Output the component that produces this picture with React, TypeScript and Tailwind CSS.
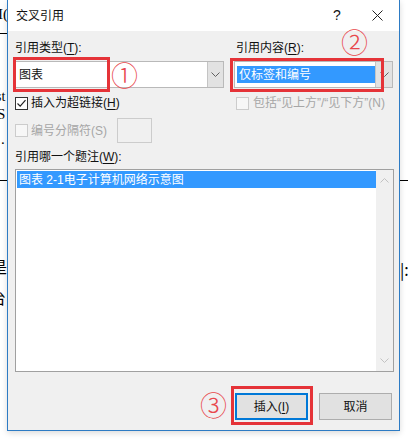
import React from 'react'

const font = "font-['Liberation_Sans','Noto_Sans_CJK_SC',sans-serif]"

function Chevron({ up = false, color = '#606060' }: { up?: boolean; color?: string }) {
  return (
    <svg width="9" height="5" viewBox="0 0 9 5" className={up ? 'rotate-180' : ''}>
      <path d="M0.5 0.5 L4.5 4.5 L8.5 0.5" fill="none" stroke={color} strokeWidth="1" />
    </svg>
  )
}

function CheckBox({ checked = false, disabled = false }: { checked?: boolean; disabled?: boolean }) {
  return (
    <div
      className={`w-[13px] h-[13px] shrink-0 border flex items-center justify-center ${
        disabled ? 'border-[#cccccc] bg-[#f7f7f7]' : 'border-[#333333] bg-white'
      }`}
    >
      {checked && (
        <svg width="11" height="11" viewBox="0 0 11 11">
          <path d="M1.5 5.5 L4.2 8.2 L9.5 2.2" fill="none" stroke="#222" strokeWidth="1.2" />
        </svg>
      )}
    </div>
  )
}

function Key({ k }: { k: string }) {
  return <span className="underline underline-offset-2">{k}</span>
}

function Circled({ n, className }: { n: string; className: string }) {
  return (
    <span
      className={`absolute text-[27px] leading-none text-[#e8474c] font-['Noto_Sans_CJK_SC',sans-serif] font-light ${className}`}
    >
      {n}
    </span>
  )
}

export default function App() {
  return (
    <div className={`relative w-[408px] h-[439px] bg-white overflow-hidden ${font} text-[12px] text-[#111]`}>
      {/* document behind the dialog */}
      <div className="absolute inset-0 font-['Liberation_Serif',serif] text-[15px] text-black">
        <span className="absolute left-[-2px] top-[3px]">I(</span>
        <div className="absolute left-0 top-[33px] w-[10px] h-px bg-black" />
        <span className="absolute left-[-4px] top-[86px] text-[14px]">st</span>
        <span className="absolute left-[-3px] top-[103px]">S</span>
        <span className="absolute left-[1px] top-[128px]">.</span>
        <div className="absolute left-0 top-[180px] w-[10px] h-px bg-black" />
        <span className="absolute left-[-9px] top-[254px] font-['Noto_Sans_CJK_SC',sans-serif] text-[16px]">是</span>
        <span className="absolute left-[-10px] top-[285px] font-['Noto_Sans_CJK_SC',sans-serif] text-[16px]">台</span>
        <div className="absolute left-[398px] top-[180px] w-[10px] h-px bg-black" />
        <span className="absolute left-[400px] top-[257px] font-['Noto_Sans_CJK_SC',sans-serif] text-[16px]">|:</span>
      </div>

      {/* dialog window */}
      <div className="relative z-10 ml-[7px] w-[393px] h-[431px] flex flex-col border-x border-b border-[#2d7bc4] shadow-[0_2px_6px_rgba(0,0,0,0.15)]">
        <div className="h-[31px] bg-white flex items-center pl-[8px] shrink-0">
          <span className="flex-1">交叉引用</span>
          <span className="w-[20px] text-center text-[14px] mr-[25px]">?</span>
          <svg width="11" height="11" viewBox="0 0 11 11" className="mr-[16px]">
            <path d="M0.5 0.5 L10.5 10.5 M10.5 0.5 L0.5 10.5" stroke="#222" strokeWidth="1" />
          </svg>
        </div>

        <div className="flex-1 bg-[#f0f0f0] pl-[7px] flex flex-col">
          <div className="mt-[9px] flex">
            {/* left column */}
            <div className="w-[209px] flex flex-col">
              <div className="h-[16px] leading-[16px]">
                引用类型(<Key k="T" />):
              </div>
              <div className="mt-[5px] h-[27px] flex bg-white border border-[#b9b9b9]">
                <div className="flex-1 pl-[3px] flex items-center">图表</div>
                <div className="w-[16px] bg-[#e2e2e2] border-l border-[#c4c4c4] flex items-center justify-center">
                  <Chevron />
                </div>
              </div>
              <div className="mt-[7px] h-[16px] flex items-center gap-[3px]">
                <CheckBox checked />
                <span>
                  插入为超链接(<Key k="H" />)
                </span>
              </div>
              <div className="mt-[7px] h-[25px] flex items-center">
                <CheckBox disabled />
                <span className="ml-[3px] text-[#a6a6a6]">编号分隔符(S)</span>
                <div className="ml-[10px] w-[35px] h-[25px] bg-[#f0f0f0] border border-[#cccccc]" />
              </div>
            </div>

            {/* right column */}
            <div className="ml-[10px] w-[159px] flex flex-col">
              <div className="h-[16px] leading-[16px] pl-[2px]">
                引用内容(<Key k="R" />):
              </div>
              <div className="mt-[5px] h-[27px] flex bg-white border border-[#b9b9b9]">
                <div className="flex-1 pl-[2px] py-[4px] flex">
                  <div className="flex-1 bg-[#3399ff] text-white pl-[2px] flex items-center">仅标签和编号</div>
                </div>
                <div className="w-[17px] bg-[#e2e2e2] border-l border-[#c4c4c4] flex items-center justify-center">
                  <Chevron />
                </div>
              </div>
              <div className="mt-[7px] h-[16px] flex items-center pl-[2px] gap-[4px]">
                <CheckBox disabled />
                <span className="text-[#a6a6a6]">包括“见上方”/“见下方”(N)</span>
              </div>
            </div>
          </div>

          <div className="mt-[6px] h-[16px] leading-[16px]">
            引用哪一个题注(<Key k="W" />):
          </div>
          <div className="mt-[4px] w-[379px] h-[203px] bg-white border border-[#a0a0a0] flex">
            <div className="flex-1 pt-[1px] pl-[1px]">
              <div className="h-[17px] bg-[#3399ff] text-white pl-[2px] flex items-center">
                图表 2-1电子计算机网络示意图
              </div>
            </div>
            <div className="w-[17px] bg-[#f0f0f0] flex flex-col items-center justify-between py-[8px]">
              <Chevron up color="#c2c2c2" />
              <Chevron color="#c2c2c2" />
            </div>
          </div>

          <div className="mt-[21px] w-[377px] flex justify-end gap-[11px]">
            <button className="w-[73px] h-[27px] bg-[#e1e1e1] border-2 border-[#0078d7] flex items-center justify-center">
              插入(<Key k="I" />)
            </button>
            <button className="w-[73px] h-[27px] bg-[#e1e1e1] border border-[#adadad] flex items-center justify-center">
              取消
            </button>
          </div>
        </div>
      </div>

      {/* annotations */}
      <div className="absolute z-20 left-[13px] top-[57px] w-[97px] h-[35px] border-[3px] border-[#e53338]" />
      <div className="absolute z-20 left-[230px] top-[58px] w-[154px] h-[34px] border-[3px] border-[#e53338]" />
      <div className="absolute z-20 left-[231px] top-[386px] w-[82px] h-[39px] border-[3px] border-[#e53338]" />
      <Circled n="①" className="z-20 left-[111px] top-[61px]" />
      <Circled n="②" className="z-20 left-[341px] top-[28px]" />
      <Circled n="③" className="z-20 left-[200px] top-[391px]" />
    </div>
  )
}
